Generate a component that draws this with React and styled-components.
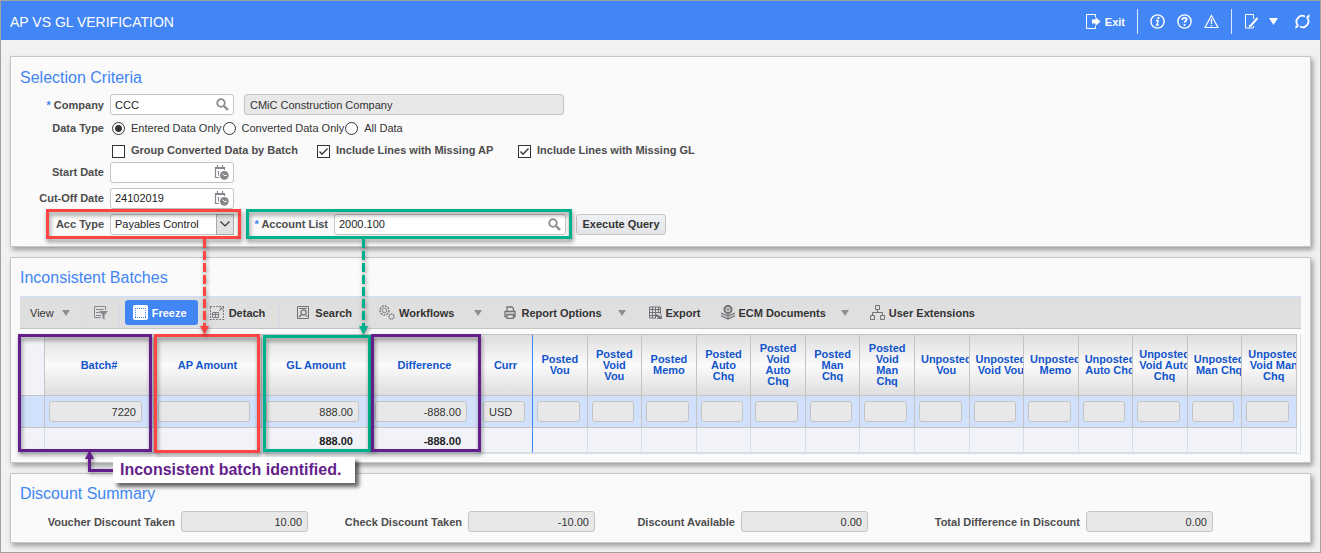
import styled, { createGlobalStyle, css } from "styled-components";

const GlobalStyle = createGlobalStyle`
	*, *::before, *::after {
		box-sizing: border-box;
	}

	body {
		margin: 0;
		background: #f0f1f3;
		font-family: "Liberation Sans", Arial, sans-serif;
		font-size: 11px;
		color: #333;
	}

	input, select, button {
		font-family: inherit;
		font-size: inherit;
	}
`;

const Page = styled.div`
	position: relative;
	min-height: 100vh;
	border: 1px solid #a3a3a3;
	overflow: hidden;
`;

const Header = styled.header`
	display: flex;
	justify-content: space-between;
	align-items: center;
	height: 39px;
	padding: 2px 9px 0;
	background: #4285f4;
	color: #fff;
`;

const PageTitle = styled.h1`
	margin: 0;
	font-size: 14px;
	font-weight: normal;
`;

const HeaderActions = styled.nav`
	display: flex;
	align-items: center;
	gap: 12px;
`;

const HeaderSplit = styled.div`
	display: flex;
	align-items: center;
	gap: 10px;
	padding-right: 4px;
`;

const HeaderButton = styled.button`
	display: flex;
	align-items: center;
	gap: 4px;
	padding: 0;
	border: 0;
	background: none;
	color: #fff;
	font-weight: bold;
`;

const HeaderDivider = styled.span`
	width: 1px;
	height: 25px;
	background: #dbe7fd;
`;

const Main = styled.main`
	display: flex;
	flex-direction: column;
	gap: 10px;
	padding: 16px 9px 9px;
`;

const Panel = styled.section`
	padding: ${(props) => props.$padding};
	background: #fafafa;
	border: 1px solid #c6c6c6;
	box-shadow: 2px 3px 5px rgba(0, 0, 0, 0.35);
`;

const PanelTitle = styled.h2`
	margin: 0;
	font-size: 16px;
	line-height: 20px;
	font-weight: normal;
	color: #4285f4;
`;

const Form = styled.form`
	display: flex;
	flex-direction: column;
	margin-top: 6px;
`;

const FormRow = styled.div`
	display: flex;
	align-items: center;
	height: ${(props) => props.$height || 26}px;
`;

const Label = styled.label`
	flex: none;
	width: ${(props) => (props.$width ? `${props.$width}px` : "auto")};
	padding-right: 6px;
	text-align: right;
	font-weight: bold;
	color: #4d4d4d;
	white-space: nowrap;
`;

const Required = styled.span`
	color: #4285f4;
`;

const FieldBox = styled.div`
	display: flex;
	align-items: center;
	width: ${(props) => props.$width}px;
	height: 21px;
	padding-right: 4px;
	background: #fff;
	border: 1px solid #c4c4c4;
	border-radius: 3px;
`;

const TextInput = styled.input`
	flex: 1;
	min-width: 0;
	height: 19px;
	padding: 0 4px;
	border: 0;
	background: transparent;
	color: #222;
	outline: 0;
`;

const ReadOnlyInput = styled.input`
	width: ${(props) => (props.$width ? `${props.$width}px` : "100%")};
	height: 21px;
	padding: 0 5px;
	border: 1px solid #c4c4c4;
	border-radius: 3px;
	background: #e8e8e8;
	color: #333;
	text-align: ${(props) => props.$align || "left"};
	outline: 0;
`;

const CompanyName = styled(ReadOnlyInput)`
	margin-left: 10px;
`;

const RadioGroup = styled.div`
	display: flex;
	align-items: center;
	padding-left: 2px;
`;

const Radio = styled.input`
	appearance: none;
	flex: none;
	width: 13px;
	height: 13px;
	margin: 0 6px 0 0;
	border: 1px solid #333;
	border-radius: 50%;
	background: #fff;

	&:checked {
		background: radial-gradient(circle, #333 0 3px, #fff 4px);
	}
`;

const RadioLabel = styled.label`
	margin-right: 1px;
	color: #333;
	white-space: nowrap;
`;

const CheckGroup = styled.div`
	display: grid;
	grid-template-columns: 205px 201px auto;
	padding-left: 2px;
`;

const CheckItem = styled.span`
	display: flex;
	align-items: center;
`;

const Checkbox = styled.input`
	appearance: none;
	flex: none;
	width: 13px;
	height: 13px;
	margin: 2px 6px 0 0;
	border: 1px solid #333;
	background: #fff;

	&:checked {
		background: #fff
			url("data:image/svg+xml,%3Csvg xmlns='http://www.w3.org/2000/svg' viewBox='0 0 11 11'%3E%3Cpath d='M1.5 5.5 4 8.2 9.5 2.5' fill='none' stroke='%23333' stroke-width='1.3'/%3E%3C/svg%3E");
	}
`;

const CheckLabel = styled.label`
	font-weight: bold;
	color: #4d4d4d;
	white-space: nowrap;
`;

const SelectBox = styled.div`
	display: flex;
	position: relative;
	width: 124px;
	height: 21px;
`;

const Select = styled.select`
	appearance: none;
	width: 100%;
	padding: 0 22px 0 4px;
	border: 1px solid #c4c4c4;
	border-radius: 3px;
	background: #fff;
	color: #222;
`;

const SelectArrow = styled.span`
	position: absolute;
	top: 0;
	right: 0;
	display: flex;
	align-items: center;
	justify-content: center;
	width: 18px;
	height: 21px;
	border: 1px solid #a8a8a8;
	background: #e1e1e1;
	pointer-events: none;
`;

const ExecuteButton = styled.button`
	width: 90px;
	height: 21px;
	margin-left: 10px;
	padding: 0;
	border: 1px solid #c4c4c4;
	border-radius: 3px;
	background: linear-gradient(#eef0f3, #e2e4e8);
	color: #333;
	font-weight: bold;
	white-space: nowrap;
`;

const Toolbar = styled.div`
	display: flex;
	align-items: center;
	height: 33px;
	margin-top: 8px;
	padding: 0 10px;
	background: #dfdfdf;
	border-top: 1px solid #cfdffb;
	border-bottom: 1px solid #c4c4c4;
`;

const ToolButton = styled.button`
	display: flex;
	align-items: center;
	gap: ${(props) => props.$gap || 4}px;
	flex: none;
	height: 25px;
	margin-left: ${(props) => props.$before || 0}px;
	padding: 0;
	border: 0;
	border-radius: 3px;
	background: none;
	color: #333;
	font-weight: ${(props) => (props.$plain ? "normal" : "bold")};
	white-space: nowrap;

	${(props) =>
		props.$active &&
		css`
			width: 73px;
			padding: 0 8px;
			background: #4285f4;
			color: #fff;
		`}
`;

const ToolDivider = styled.span`
	width: 1px;
	height: 30px;
	margin-left: ${(props) => props.$before}px;
	background: #d3dce6;
`;

const Caret = styled.span`
	margin-left: ${(props) => props.$before || 0}px;
	border: 4px solid transparent;
	border-top: 6px solid #8b8f94;
	border-bottom: 0;
`;

const TableWrap = styled.div`
	margin-top: 5px;
	padding-right: 3px;
	border-right: 1px solid #d5dfe8;
	border-bottom: 1px solid #d5dfe8;
`;

const Table = styled.table`
	width: 100%;
	table-layout: fixed;
	border-collapse: separate;
	border-spacing: 0;
	border-top: 1px solid #c4c4c4;
`;

const Column = styled.col`
	width: ${(props) => props.$width}px;
`;

const HeadCell = styled.th`
	height: 61px;
	padding: 0 6px;
	overflow: hidden;
	border-right: 1px solid ${(props) => (props.$frozenEdge ? "#4285f4" : "#c4c4c4")};
	border-bottom: 1px solid #c4c4c4;
	background: ${(props) => (props.$blank ? "#f1f3f8" : "linear-gradient(#dedede, #fbfbfb 50%, #dedede)")};
	color: #1155cc;
	line-height: 11px;
`;

const HeadText = styled.div`
	width: max-content;
	min-width: 100%;
	white-space: pre;
`;

const BodyCell = styled.td`
	height: 32px;
	padding: 0 ${(props) => (props.$wide ? 11 : 7)}px 0 4px;
	border-right: 1px solid ${(props) => (props.$frozenEdge ? "#4285f4" : "#c4c4c4")};
	border-bottom: 1px solid #c4c4c4;
	background: #d2e1fb;
`;

const FootCell = styled.td`
	height: 25px;
	padding: 1px 17px 0 4px;
	border-right: 1px solid ${(props) => (props.$frozenEdge ? "#4285f4" : "#d5dfe8")};
	border-bottom: 1px solid #d5dfe8;
	background: #f1f3f8;
	color: #222;
	font-weight: bold;
	text-align: right;
`;

const Summary = styled.div`
	display: grid;
	grid-template-columns: 288px 287px 273px 345px;
	margin-top: 7px;
`;

const SummaryItem = styled.div`
	display: flex;
	align-items: center;
	justify-content: flex-end;
`;

const Annotations = styled.div`
	position: absolute;
	inset: 0;
	pointer-events: none;
`;

const Highlight = styled.div`
	position: absolute;
	left: ${(props) => props.$x}px;
	top: ${(props) => props.$y}px;
	width: ${(props) => props.$w}px;
	height: ${(props) => props.$h}px;
	border: 3px solid ${(props) => props.$color};
	filter: drop-shadow(1px 3px 2px rgba(0, 0, 0, 0.45));
`;

const Arrows = styled.svg`
	position: absolute;
	left: 0;
	top: 0;
	filter: drop-shadow(1px 2px 2px rgba(0, 0, 0, 0.4));
`;

const Callout = styled.div`
	position: absolute;
	left: 112px;
	top: 456px;
	width: 242px;
	height: 26px;
	padding-left: 7px;
	background: #fff;
	color: #641e8c;
	font-size: 16px;
	line-height: 25px;
	font-weight: bold;
	white-space: nowrap;
	box-shadow: 4px 4px 4px rgba(0, 0, 0, 0.6);
`;

const RED = "#ff4444";
const GREEN = "#00b08c";
const PURPLE = "#641e8c";

const highlights = [
	{ x: 45, y: 208, w: 195, h: 30, color: RED },
	{ x: 245, y: 208, w: 326, h: 30, color: GREEN },
	{ x: 17, y: 333, w: 134, h: 118, color: PURPLE },
	{ x: 153, y: 333, w: 106, h: 119, color: RED },
	{ x: 262, y: 334, w: 108, h: 117, color: GREEN },
	{ x: 370, y: 333, w: 110, h: 118, color: PURPLE },
];

const frozenColumns = [
	{ label: "Batch#", width: 109, value: "7220", wide: true },
	{ label: "AP Amount", width: 108, value: "", wide: true },
	{ label: "GL Amount", width: 109, value: "888.00", total: "888.00", wide: true },
	{ label: "Difference", width: 108, value: "-888.00", total: "-888.00", wide: true },
	{ label: "Curr", width: 54, value: "USD", align: "left", frozenEdge: true },
];

const scrollColumns = [
	"Posted\nVou",
	"Posted\nVoid\nVou",
	"Posted\nMemo",
	"Posted\nAuto\nChq",
	"Posted\nVoid\nAuto\nChq",
	"Posted\nMan\nChq",
	"Posted\nVoid\nMan\nChq",
	"Unposted\nVou",
	"Unposted\nVoid Vou",
	"Unposted\nMemo",
	"Unposted\nAuto Chq",
	"Unposted\nVoid Auto\nChq",
	"Unposted\nMan Chq",
	"Unposted\nVoid Man\nChq",
].map((label) => ({ label, value: "" }));

const columns = [...frozenColumns, ...scrollColumns];

const summaryItems = [
	{ id: "voucher-discount", label: "Voucher Discount Taken", value: "10.00" },
	{ id: "check-discount", label: "Check Discount Taken", value: "-10.00" },
	{ id: "discount-available", label: "Discount Available", value: "0.00" },
	{ id: "total-difference", label: "Total Difference in Discount", value: "0.00" },
];

function Icon({ size = 14, width, children, stroke = "currentColor" }) {
	return (
		<svg
			width={width || size}
			height={size}
			viewBox={`0 0 ${width || size} ${size}`}
			fill="none"
			stroke={stroke}
			aria-hidden="true"
		>
			{children}
		</svg>
	);
}

function SearchGlass() {
	return (
		<Icon size={13} stroke="#8a8d91">
			<circle cx="5" cy="5" r="3.8" strokeWidth="1.8" />
			<path d="M8 8l4 4" strokeWidth="2.4" />
		</Icon>
	);
}

function CalendarClock() {
	return (
		<Icon size={15} stroke="#85888c">
			<path d="M5 12.5H1.5V2.5h9V5M1 3.5h10M3.5 0v3M8.5 0v3" strokeWidth="1.2" />
			<path d="M3.500 7L4.500 6v4.500" />
			<circle cx="10.300" cy="10.300" r="4.400" fill="#85888c" stroke="none" />
			<path d="M8.500 8.700l1.800 1.800h2.400" stroke="#fff" />
		</Icon>
	);
}

function HeaderBar() {
	return (
		<Header>
			<PageTitle>AP VS GL VERIFICATION</PageTitle>
			<HeaderActions>
				<HeaderButton>
					<Icon size={15}>
						<path d="M9.5 3V.5h-9v14h9V12" />
						<path d="M6 5.5h3.500V3l5 4.500-5 4.500V9.500H6z" fill="currentColor" stroke="none" />
					</Icon>
					Exit
				</HeaderButton>
				<HeaderDivider />
				<HeaderButton aria-label="Information">
					<Icon size={15}>
						<circle cx="7.5" cy="7.5" r="6.6" strokeWidth="1.4" />
						<path d="M6 6.5h2L7.2 11h1.5M5.8 11h1.500" strokeWidth="1.500" />
						<circle cx="8.4" cy="3.9" r="1.2" fill="currentColor" stroke="none" />
					</Icon>
				</HeaderButton>
				<HeaderButton aria-label="Help">
					<Icon size={15}>
						<circle cx="7.5" cy="7.5" r="6.6" strokeWidth="1.4" />
						<path d="M5.3 6V5.5c0-2.2 4.4-2.2 4.4 0 0 1.5-2.2 1.5-2.2 3.2" strokeWidth="1.8" />
						<path d="M7.5 10v1.8" strokeWidth="1.8" />
					</Icon>
				</HeaderButton>
				<HeaderButton aria-label="Alerts">
					<Icon size={15}>
						<path d="M7.5 1.5L14 13.5H1z" strokeWidth="1.2" />
						<path d="M7.500 5v5M7.500 11v1.500" strokeWidth="1.400" />
					</Icon>
				</HeaderButton>
				<HeaderDivider />
				<HeaderSplit>
					<HeaderButton aria-label="Edit">
						<Icon size={15}>
							<path d="M9.5 5V.5h-8V14h8v-2" />
							<path d="M13.5 4L7 11.5l-2 1" strokeWidth="2" />
						</Icon>
					</HeaderButton>
					<HeaderButton aria-label="More actions">
						<Icon size={7} width={9}>
							<path d="M0 0h9L4.5 7z" fill="currentColor" stroke="none" />
						</Icon>
					</HeaderButton>
				</HeaderSplit>
				<HeaderButton aria-label="Refresh">
					<Icon size={15} width={17}>
						<path d="M4 11.500A5.800 5.800 0 0 1 11 2.500M13 3.500A5.800 5.800 0 0 1 6 12.500" strokeWidth="1.800" />
						<path d="M11.500 3.500h4v-3.500zM5.500 11.500h-4V15z" fill="currentColor" stroke="none" />
					</Icon>
				</HeaderButton>
			</HeaderActions>
		</Header>
	);
}

function SelectionCriteria() {
	return (
		<Panel $padding="11px 9px 9px">
			<PanelTitle>Selection Criteria</PanelTitle>
			<Form>
				<FormRow $height={21}>
					<Label $width={90} htmlFor="company">
						<Required>*</Required> Company
					</Label>
					<FieldBox $width={124}>
						<TextInput id="company" defaultValue="CCC" />
						<SearchGlass />
					</FieldBox>
					<CompanyName aria-label="Company name" $width={320} readOnly value="CMiC Construction Company" />
				</FormRow>
				<FormRow>
					<Label as="span" id="data-type" $width={90}>
						Data Type
					</Label>
					<RadioGroup role="radiogroup" aria-labelledby="data-type">
						<Radio type="radio" name="dataType" id="entered" defaultChecked />
						<RadioLabel htmlFor="entered">Entered Data Only</RadioLabel>
						<Radio type="radio" name="dataType" id="converted" />
						<RadioLabel htmlFor="converted">Converted Data Only</RadioLabel>
						<Radio type="radio" name="dataType" id="all" />
						<RadioLabel htmlFor="all">All Data</RadioLabel>
					</RadioGroup>
				</FormRow>
				<FormRow $height={18}>
					<Label as="span" $width={90} />
					<CheckGroup>
						<CheckItem>
							<Checkbox type="checkbox" id="group" />
							<CheckLabel htmlFor="group">Group Converted Data by Batch</CheckLabel>
						</CheckItem>
						<CheckItem>
							<Checkbox type="checkbox" id="missing-ap" defaultChecked />
							<CheckLabel htmlFor="missing-ap">Include Lines with Missing AP</CheckLabel>
						</CheckItem>
						<CheckItem>
							<Checkbox type="checkbox" id="missing-gl" defaultChecked />
							<CheckLabel htmlFor="missing-gl">Include Lines with Missing GL</CheckLabel>
						</CheckItem>
					</CheckGroup>
				</FormRow>
				<FormRow>
					<Label $width={90} htmlFor="start-date">
						Start Date
					</Label>
					<FieldBox $width={124}>
						<TextInput id="start-date" />
						<CalendarClock />
					</FieldBox>
				</FormRow>
				<FormRow>
					<Label $width={90} htmlFor="cutoff-date">
						Cut-Off Date
					</Label>
					<FieldBox $width={124}>
						<TextInput id="cutoff-date" defaultValue="24102019" />
						<CalendarClock />
					</FieldBox>
				</FormRow>
				<FormRow>
					<Label $width={90} htmlFor="acc-type">
						Acc Type
					</Label>
					<SelectBox>
						<Select id="acc-type">
							<option>Payables Control</option>
						</Select>
						<SelectArrow>
							<Icon size={6} width={10}>
								<path d="M.5.5L5 5 9.500.5" strokeWidth="1.2" />
							</Icon>
						</SelectArrow>
					</SelectBox>
					<Label $width={100} htmlFor="account-list">
						<Required>*</Required> Account List
					</Label>
					<FieldBox $width={232}>
						<TextInput id="account-list" defaultValue="2000.100" />
						<SearchGlass />
					</FieldBox>
					<ExecuteButton type="button">Execute Query</ExecuteButton>
				</FormRow>
			</Form>
		</Panel>
	);
}

function BatchToolbar() {
	return (
		<Toolbar role="toolbar">
			<ToolButton $plain $gap={8}>
				View <Caret />
			</ToolButton>
			<ToolDivider $before={12} />
			<ToolButton $before={11} aria-label="Query by example">
				<Icon stroke="#85888c">
					<path d="M7 11.5H.5v-11h11V4M2 3.500h8M2 6.500h4M2 9.500h5" />
					<path d="M5 5h9l-3.500 4v5L8.500 12V9z" fill="#85888c" stroke="none" />
				</Icon>
			</ToolButton>
			<ToolDivider $before={11} />
			<ToolButton $active $before={5}>
				<Icon size={15}>
					<rect x="0" y="0" width="15" height="15" rx="2" fill="#fff" stroke="none" />
					<path d="M2 3.5h11M2 12.5h11M2.500 5v7M12.500 5v7" stroke="#4285f4" strokeDasharray="1 1" />
				</Icon>
				Freeze
			</ToolButton>
			<ToolButton $before={12} $gap={5}>
				<Icon stroke="#7b7e82">
					<path d="M0 .5h14M0 13.500h14M.5 1v12M13.500 1v12" strokeDasharray="2 1" />
					<path d="M2.500 6.500h6v5h-6zM2.500 8.500h6M5.500 6.500v5M9 5l3-3M9.500 2H12v2.500" />
				</Icon>
				Detach
			</ToolButton>
			<ToolDivider $before={14} />
			<ToolButton $before={17} $gap={5}>
				<Icon size={13} stroke="#6f7276">
					<path d="M.5.5h11v12H.5zM2 2.500h8" />
					<circle cx="6.500" cy="6.500" r="2.600" strokeWidth="1.300" />
					<path d="M4.500 8.500L2 11M9 10h1.500" strokeWidth="1.400" />
				</Icon>
				Search
			</ToolButton>
			<ToolButton $before={27}>
				<Icon size={15} width={16} stroke="#7b7e82">
					<circle cx="5.5" cy="5.5" r="4.5" strokeDasharray="2 1" strokeWidth="1.5" />
					<circle cx="5.5" cy="5.5" r="2.2" />
					<circle cx="12.5" cy="11.5" r="2.5" strokeDasharray="1.5 .7" strokeWidth="1.5" />
				</Icon>
				Workflows
			</ToolButton>
			<Caret $before={20} />
			<ToolButton $before={22} $gap={5}>
				<Icon size={13} width={12} stroke="#6f7276">
					<path d="M3 5V1h5l1.5 1.5V5M2.500 10.500H1V5.500h10v5H9.500M3 8.500h6.500v4H3z" strokeWidth="1.300" />
				</Icon>
				Report Options
			</ToolButton>
			<Caret $before={16} />
			<ToolButton $before={23}>
				<Icon size={13} stroke="#6f7276">
					<path d="M.5 1h11v7M.5 1v11H7M.5 3.500h11M.5 6.500h11M.5 9.500H7M3.500 1v11M6.500 1v11M9.500 1v5" />
					<path d="M7 8l5 3V8.500l1 4.500H8l2-1-3.500-2z" fill="#6f7276" strokeWidth=".5" />
				</Icon>
				Export
			</ToolButton>
			<ToolButton $before={21} $gap={3}>
				<Icon size={15} width={14} stroke="#6f7276">
					<circle cx="7" cy="4.5" r="3.5" strokeWidth="2" />
					<path d="M7 8v6M0 8l7 3 7-3M0 10.500l7 3.500 7-3.500" strokeWidth="1.200" />
					<circle cx="7" cy="4.5" r="1" />
				</Icon>
				ECM Documents
			</ToolButton>
			<Caret $before={15} />
			<ToolButton $before={21}>
				<Icon size={15} stroke="#6f7276">
					<path d="M5.5.5h4v4h-4zM.5 10.500h4v4h-4zM10.500 10.500h4v4h-4zM7.500 4.500v3M2.500 10V7.500h10V10" />
				</Icon>
				User Extensions
			</ToolButton>
		</Toolbar>
	);
}

function BatchTable() {
	return (
		<TableWrap>
			<Table>
				<colgroup>
					<Column $width={25} />
					{frozenColumns.map((col) => (
						<Column key={col.label} $width={col.width} />
					))}
				</colgroup>
				<thead>
					<tr>
						<HeadCell $blank />
						{columns.map((col) => (
							<HeadCell key={col.label} $frozenEdge={col.frozenEdge}>
								<HeadText>{col.label}</HeadText>
							</HeadCell>
						))}
					</tr>
				</thead>
				<tbody>
					<tr>
						<BodyCell />
						{columns.map((col) => (
							<BodyCell key={col.label} $wide={col.wide} $frozenEdge={col.frozenEdge}>
								<ReadOnlyInput
									aria-label={col.label.replaceAll("\n", " ")}
									readOnly
									value={col.value}
									$align={col.align || "right"}
								/>
							</BodyCell>
						))}
					</tr>
				</tbody>
				<tfoot>
					<tr>
						<FootCell />
						{columns.map((col) => (
							<FootCell key={col.label} $frozenEdge={col.frozenEdge}>
								{col.total}
							</FootCell>
						))}
					</tr>
				</tfoot>
			</Table>
		</TableWrap>
	);
}

function DiscountSummary() {
	return (
		<Panel $padding="10px 9px">
			<PanelTitle>Discount Summary</PanelTitle>
			<Summary>
				{summaryItems.map((item) => (
					<SummaryItem key={item.id}>
						<Label htmlFor={item.id}>{item.label}</Label>
						<ReadOnlyInput id={item.id} $width={127} $align="right" readOnly value={item.value} />
					</SummaryItem>
				))}
			</Summary>
		</Panel>
	);
}

function AnnotationLayer() {
	return (
		<Annotations>
			{highlights.map((box) => (
				<Highlight key={box.x} $x={box.x} $y={box.y} $w={box.w} $h={box.h} $color={box.color} />
			))}
			<Arrows width="600" height="500" fill="none" strokeWidth="3">
				<path d="M203.5 238v88" stroke={RED} strokeDasharray="9 3" />
				<path d="M199 325h9l-4.500 9z" fill={RED} />
				<path d="M362.5 238v88" stroke={GREEN} strokeDasharray="9 3" />
				<path d="M358 325h9l-4.500 9z" fill={GREEN} />
				<path d="M88.500 457v12.500H112" stroke={PURPLE} />
				<path d="M84 458h9l-4.500-9z" fill={PURPLE} />
			</Arrows>
			<Callout>Inconsistent batch identified.</Callout>
		</Annotations>
	);
}

function App() {
	return (
		<>
			<GlobalStyle />
			<Page>
				<HeaderBar />
				<Main>
					<SelectionCriteria />
					<Panel $padding="10px 9px 8px">
						<PanelTitle>Inconsistent Batches</PanelTitle>
						<BatchToolbar />
						<BatchTable />
					</Panel>
					<DiscountSummary />
				</Main>
				<AnnotationLayer />
			</Page>
		</>
	);
}

export default App;
